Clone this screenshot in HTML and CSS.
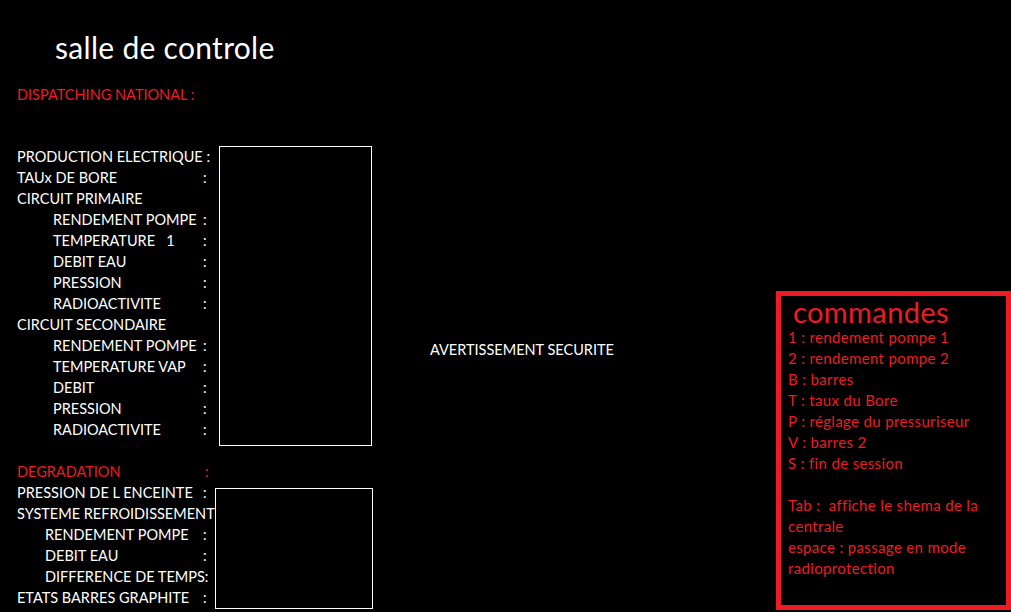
FILE: index.html
```html
<!DOCTYPE html>
<html lang="fr">
<head>
<meta charset="utf-8">
<title>salle de controle</title>
<link rel="stylesheet" href="styles.css">
</head>
<body>
<div class="page">
  <h1 class="title">salle de controle</h1>
  <div class="dispatch">DISPATCHING NATIONAL :</div>
  <div class="main">
    <div class="left">
      <div class="group group1">
        <div class="labels">
          <div class="row"><span class="lab">PRODUCTION ELECTRIQUE&nbsp;</span><span class="col">:</span></div>
          <div class="row"><span class="lab">TAUx DE BORE</span><span class="col">:</span></div>
          <div class="row"><span class="lab">CIRCUIT PRIMAIRE</span></div>
          <div class="row ind1"><span class="lab">RENDEMENT POMPE&nbsp;</span><span class="col">:</span></div>
          <div class="row ind1"><span class="lab">TEMPERATURE &nbsp;&nbsp;1</span><span class="col">:</span></div>
          <div class="row ind1"><span class="lab">DEBIT EAU</span><span class="col">:</span></div>
          <div class="row ind1"><span class="lab">PRESSION</span><span class="col">:</span></div>
          <div class="row ind1"><span class="lab">RADIOACTIVITE</span><span class="col">:</span></div>
          <div class="row"><span class="lab">CIRCUIT SECONDAIRE</span></div>
          <div class="row ind1"><span class="lab">RENDEMENT POMPE&nbsp;</span><span class="col">:</span></div>
          <div class="row ind1"><span class="lab">TEMPERATURE VAP</span><span class="col">:</span></div>
          <div class="row ind1"><span class="lab">DEBIT</span><span class="col">:</span></div>
          <div class="row ind1"><span class="lab">PRESSION</span><span class="col">:</span></div>
          <div class="row ind1"><span class="lab">RADIOACTIVITE</span><span class="col">:</span></div>
        </div>
        <div class="box box1"></div>
      </div>
      <div class="row red"><span class="lab">DEGRADATION</span><span class="col">:</span></div>
      <div class="group group2">
        <div class="labels">
          <div class="row"><span class="lab">PRESSION DE L ENCEINTE</span><span class="col">:</span></div>
          <div class="row"><span class="lab">SYSTEME REFROIDISSEMENT</span></div>
          <div class="row ind2"><span class="lab">RENDEMENT POMPE</span><span class="col">:</span></div>
          <div class="row ind2"><span class="lab">DEBIT EAU</span><span class="col">:</span></div>
          <div class="row ind2"><span class="lab">DIFFERENCE DE TEMPS</span><span class="col">:</span></div>
          <div class="row"><span class="lab">ETATS BARRES GRAPHITE</span><span class="col">:</span></div>
        </div>
        <div class="box box2"></div>
      </div>
    </div>
    <div class="middle">
      <div class="warning">AVERTISSEMENT SECURITE</div>
    </div>
    <div class="right">
      <div class="commands">
        <div class="cmd-title">commandes</div>
        <div class="cmd-list">
          <div>1 : rendement pompe 1</div>
          <div>2 : rendement pompe 2</div>
          <div>B : barres</div>
          <div>T : taux du Bore</div>
          <div>P : réglage du pressuriseur</div>
          <div>V : barres 2</div>
          <div>S : fin de session</div>
          <div class="blank">&nbsp;</div>
          <div>Tab : &nbsp;affiche le shema de la</div>
          <div>centrale</div>
          <div>espace : passage en mode</div>
          <div>radioprotection</div>
        </div>
      </div>
    </div>
  </div>
</div>
</body>
</html>
```

FILE: styles.css
```css
html, body {
  margin: 0;
  padding: 0;
  background: #000;
}
body {
  font-family: Lato, "Open Sans", sans-serif;
  font-size: 14.5px;
  color: #fff;
  width: 1011px;
  height: 612px;
  overflow: hidden;
}
.page {
  display: flex;
  flex-direction: column;
}
.title {
  margin: 0;
  padding: 29px 0 0 55px;
  height: 36px;
  font-size: 30px;
  font-weight: 400;
  line-height: 36px;
  letter-spacing: 0.3px;
}
.dispatch {
  color: #ed1c24;
  padding: 19px 0 0 17px;
  line-height: 21px;
  height: 21px;
}
.main {
  display: flex;
  padding: 41px 0 0 17px;
}
.left {
  width: 356px;
  flex: none;
  display: flex;
  flex-direction: column;
}
.group {
  display: flex;
}
.labels {
  display: flex;
  flex-direction: column;
}
.group1 .labels {
  width: 202px;
}
.group2 .labels {
  width: 199px;
}
.row {
  display: flex;
  height: 21px;
  line-height: 21px;
  white-space: nowrap;
}
.row .lab {
  min-width: 186px;
  flex: none;
}
.row.ind1 .lab {
  min-width: 150px;
  padding-left: 36px;
}
.row.ind2 .lab {
  min-width: 158px;
  padding-left: 28px;
}
.row.red {
  color: #ed1c24;
}
.row.red .col {
  padding-left: 2px;
}
.box {
  border: 1px solid #fff;
  box-sizing: border-box;
  flex: none;
}
.box1 {
  width: 153px;
  height: 300px;
}
.group1 {
  margin-bottom: 15px;
}
.box2 {
  width: 158px;
  height: 121px;
  margin-top: 6px;
}
.middle {
  width: 403px;
  flex: none;
}
.warning {
  padding: 193px 0 0 57px;
  line-height: 21px;
}
.right {
  flex: none;
}
.commands {
  margin-top: 145px;
  width: 235px;
  height: 319px;
  box-sizing: border-box;
  border: 5px solid #ed1c24;
  color: #ed1c24;
  padding: 1px 0 0 7px;
}
.cmd-title {
  font-size: 29px;
  line-height: 30px;
  padding-left: 5px;
  height: 30px;
  letter-spacing: 0.4px;
}
.cmd-list {
  font-size: 15px;
  letter-spacing: 0.35px;
}
.cmd-list div {
  line-height: 21px;
  height: 21px;
  white-space: nowrap;
}
```
